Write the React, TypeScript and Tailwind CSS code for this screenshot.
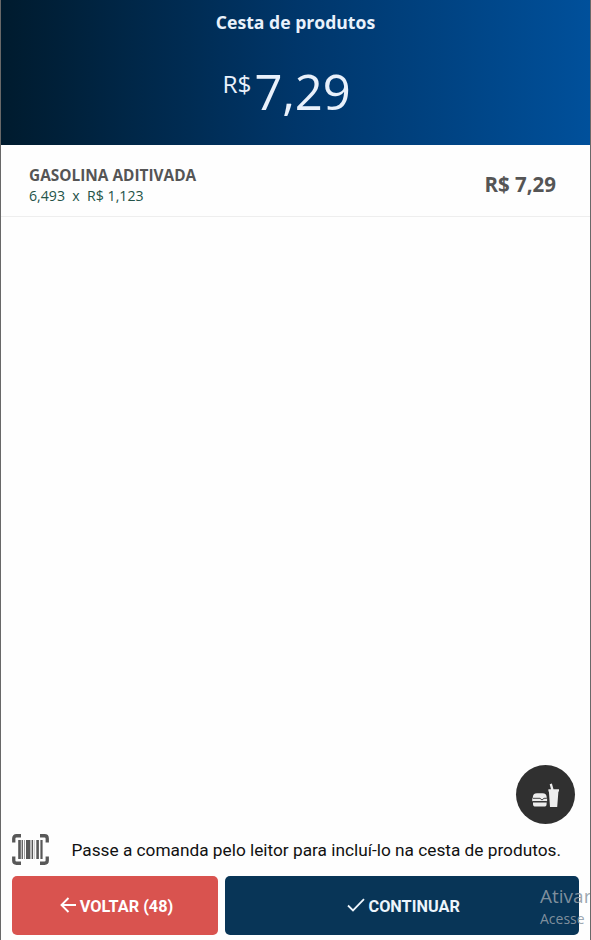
const openSans = "font-['Open_Sans',sans-serif]";
const roboto = "font-['Roboto',sans-serif]";

function BarcodeIcon() {
  return (
    <svg width="37" height="31" viewBox="0 0 37 31" fill="none" stroke="#585858" className="shrink-0">
      <path
        d="M1.75 8.5V4.5Q1.75 1.75 4.5 1.75H9M28 1.75H32.5Q35.25 1.75 35.25 4.5V8.5M1.75 22.5V26.5Q1.75 29.25 4.5 29.25H9M28 29.25H32.5Q35.25 29.25 35.25 26.5V22.5"
        strokeWidth="3.3"
      />
      <g fill="#585858" stroke="none">
        <rect x="6.2" y="6" width="2.6" height="19" />
        <rect x="9.6" y="6" width="1.3" height="19" />
        <rect x="14" y="6" width="4.4" height="19" />
        <rect x="19.6" y="6" width="1.4" height="19" />
        <rect x="24.3" y="6" width="2.6" height="19" />
        <rect x="28.4" y="6" width="2.2" height="19" />
      </g>
      <rect x="12" y="6" width="1" height="19" fill="#a0a0a0" stroke="none" />
      <rect x="21.8" y="6" width=".8" height="19" fill="#b0b0b0" stroke="none" />
    </svg>
  );
}

function SnackIcon() {
  return (
    <svg width="28" height="26" viewBox="0 0 28 26" fill="#ededed">
      <path d="M.8 16.2V14.5Q.8 10.2 5 10.2H10.5Q14.7 10.2 14.7 14.5V16.2Z" />
      <path d="M.2 15.4H15.1V18.2H.2Z" />
      <path d="M1 19.3H14.6V21Q14.6 23.6 12 23.6H3.6Q1 23.6 1 21Z" />
      <path d="M1 15.3H8L10 17L12 15.3H14.8" fill="none" stroke="#303030" strokeWidth=".9" />
      <path d="M1 18.8H14.6" stroke="#303030" strokeWidth="1" />
      <path d="M16.4 6.2H19L17.7 1.2L19.9 .4L21.5 6.2H27V8.6H26.4L25.2 24H18L16.9 8.6H16.4Z" />
    </svg>
  );
}

export default function App() {
  return (
    <div className={`relative flex h-[940px] w-[591px] flex-col overflow-hidden border-x border-[#686868] bg-[#fefefe] ${openSans}`}>
      <header className="flex h-[145px] shrink-0 flex-col items-center bg-linear-to-r from-[#001b2e] via-[#00366a] to-[#00509b] text-[#e9f1fb]">
        <h1 className="mt-2.5 text-[17.6px] leading-6 font-bold">Cesta de produtos</h1>
        <div className="mt-[23px] mr-[18px] flex items-start">
          <span className="mt-[11px] mr-[3px] text-[24.4px] leading-8">R$</span>
          <span className="text-[49px] leading-[68px] tracking-[-0.2px]">7,29</span>
        </div>
      </header>
      <main className="flex-1">
        <div className="flex h-[72px] items-center justify-between border-b border-[#eeeeee] pr-[34px] pl-7">
          <div className="pt-2.5">
            <div className="text-[15.4px] leading-[21px] font-bold text-[#555555]">GASOLINA ADITIVADA</div>
            <div className="-mt-px text-[14.15px] leading-[21px] whitespace-pre text-[#245348]">{"6,493  x  R$ 1,123"}</div>
          </div>
          <div className="pt-1.5 text-[20.5px] leading-7 font-bold text-[#555555]">R$ 7,29</div>
        </div>
      </main>
      <div className="flex justify-end pr-[15px] pb-[9px]">
        <button className="flex size-[59px] items-center justify-center rounded-full bg-[#303030] pt-0.5 pl-px" aria-label="Produtos">
          <SnackIcon />
        </button>
      </div>
      <footer className={`h-[107px] shrink-0 px-[11px] ${roboto}`}>
        <div className="flex h-[43px] items-start pt-px">
          <BarcodeIcon />
          <p className="ml-[22.5px] pt-1 text-[17.25px] leading-6 whitespace-nowrap text-[#111111]">
            Passe a comanda pelo leitor para incluí-lo na cesta de produtos.
          </p>
        </div>
        <div className="flex h-[59px] gap-[7.4px] text-[16.3px] leading-6 font-bold text-white">
          <button className="flex w-[206px] items-center justify-center gap-1 rounded-[5px] bg-[#d9534f] pt-[3px] pl-[3px]">
            <svg width="16" height="16" viewBox="0 0 16 16" fill="none" stroke="currentColor" strokeWidth="1.9" className="-mt-1">
              <path d="M16 8H1.5M8.5 1L1.5 8L8.5 15" />
            </svg>
            <span>VOLTAR (48)</span>
          </button>
          <button className="flex flex-1 items-center justify-center gap-[3px] rounded-[5px] bg-[#083557] pt-[3px] pl-[3px] text-[#edf5fc]">
            <svg width="18" height="14" viewBox="0 0 18 14" fill="none" stroke="currentColor" strokeWidth="1.8" className="-mt-1">
              <path d="M1 7.5L6 12.5L17 1.2" />
            </svg>
            <span>CONTINUAR</span>
          </button>
        </div>
      </footer>
      <div className="absolute top-[884px] left-[539px] font-['Open_Sans',sans-serif] whitespace-nowrap text-[#8f9ba6]/90">
        <div className="text-[19px] leading-6">Ativar</div>
        <div className="text-[14px] leading-[22px]">Acesse</div>
      </div>
    </div>
  );
}
